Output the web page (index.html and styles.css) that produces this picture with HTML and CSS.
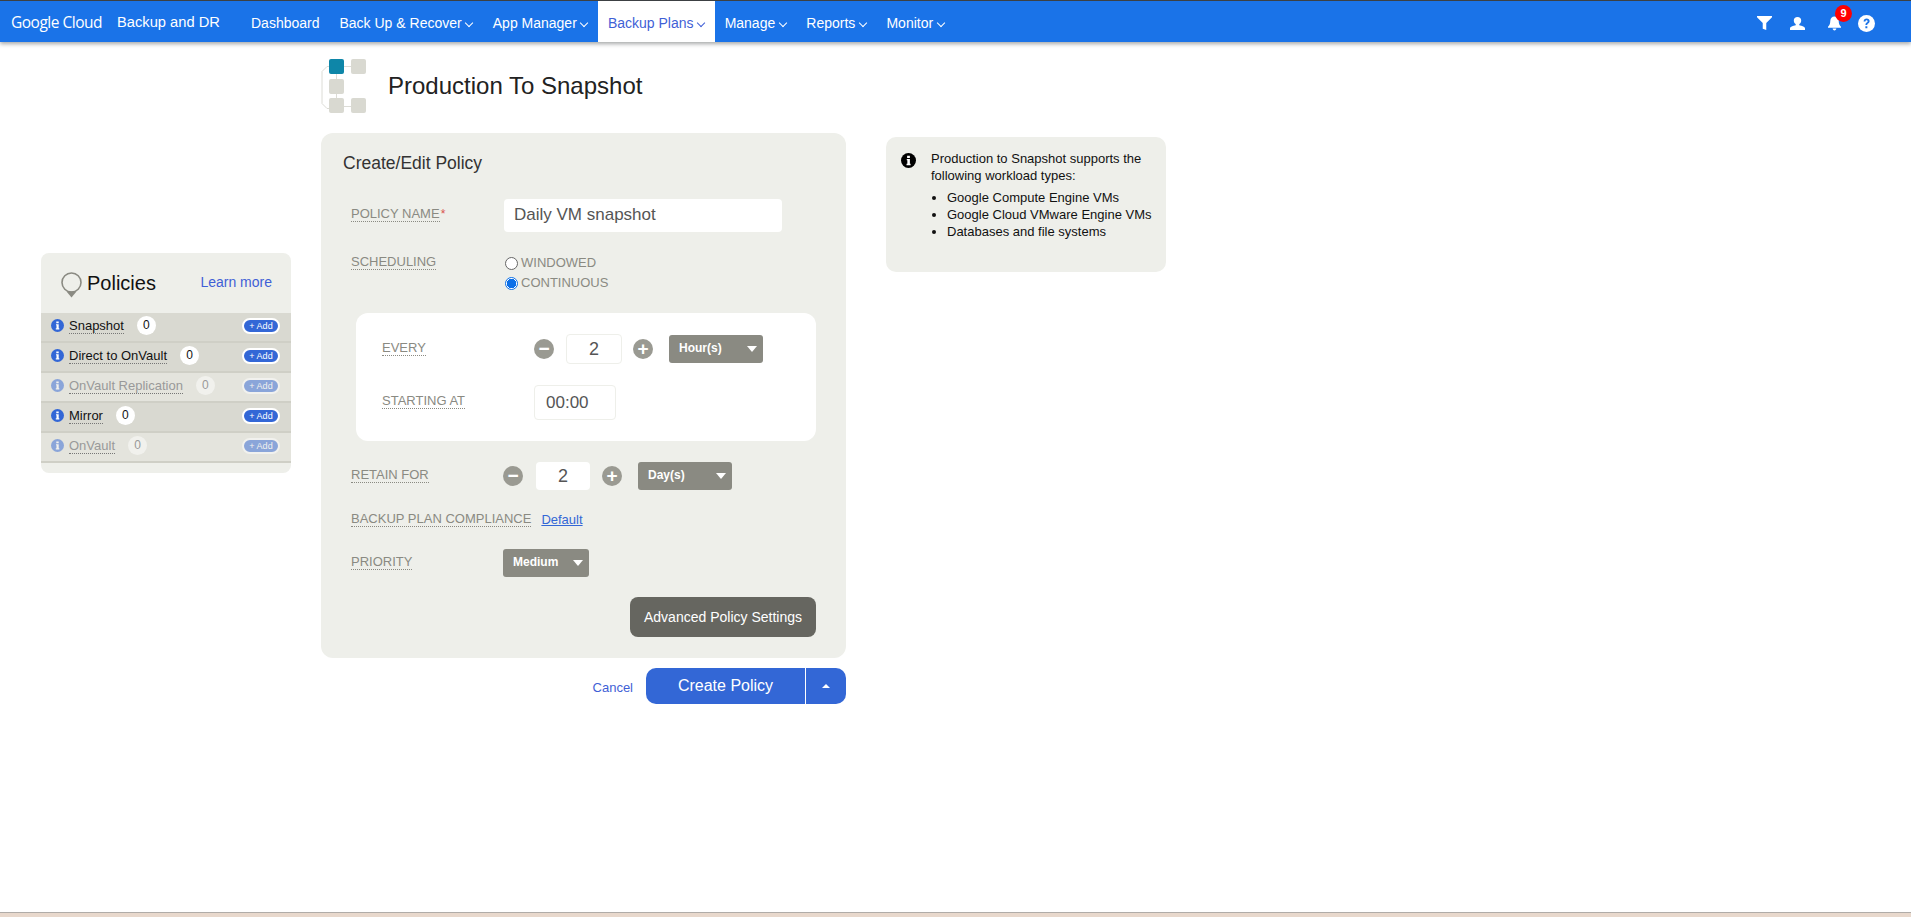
FILE: index.html
```html
<!DOCTYPE html>
<html lang="en">
<head>
  <meta charset="UTF-8">
  <title>Production To Snapshot</title>
  <link rel="stylesheet" href="styles.css">
</head>
<body>
  <header class="topbar">
    <div class="brand">Google Cloud</div>
    <div class="product">Backup and DR</div>
    <nav class="menu">
      <a class="menu-item">Dashboard</a>
      <a class="menu-item caret">Back Up &amp; Recover</a>
      <a class="menu-item caret">App Manager</a>
      <a class="menu-item caret active">Backup Plans</a>
      <a class="menu-item caret">Manage</a>
      <a class="menu-item caret">Reports</a>
      <a class="menu-item caret">Monitor</a>
    </nav>
    <div class="tools">
      <svg class="tool tool-filter" width="15" height="14" viewBox="0 0 17 16" preserveAspectRatio="none"><path d="M0 0h17v1.500L10.500 8v8l-4-1.500V8L0 1.500z" fill="#fff"/></svg>
      <svg class="tool tool-user" width="15" height="13" viewBox="0 0 15 15" preserveAspectRatio="none"><path d="M7.500 0c2.300 0 3.700 1.700 3.700 3.900 0 1.800-.8 3.400-1.900 4.300v1.200c2.500.8 5.700 1.700 5.700 3.600v2H0v-2c0-1.900 3.200-2.800 5.700-3.600V8.200C4.600 7.300 3.800 5.700 3.800 3.900 3.800 1.700 5.200 0 7.500 0z" fill="#fff"/></svg>
      <span class="bell">
        <svg width="13" height="15" viewBox="0 0 14 16"><path d="M7 .5c2.800 0 4.300 2 4.500 4.500.2 3 .6 4.700 2.500 6.500v1H0v-1C1.900 9.700 2.300 8 2.500 5 2.700 2.500 4.200.5 7 .5zM5 13.500h4c0 1.100-.9 2-2 2s-2-.9-2-2z" fill="#fff"/></svg>
        <span class="badge">9</span>
      </span>
      <svg class="tool" width="17" height="17" viewBox="0 0 18 18"><circle cx="9" cy="9" r="9" fill="#fff"/><path d="M5.900 6.800C6 4.900 7.300 3.700 9.200 3.700c1.800 0 3.100 1.100 3.100 2.700 0 1.200-.6 1.900-1.500 2.500-.8.500-1 .8-1 1.500v.3H7.900v-.5c0-1.100.4-1.700 1.300-2.300.7-.5 1-.8 1-1.400 0-.6-.4-1-1.100-1-.7 0-1.200.5-1.200 1.300zM7.800 12h2.100v2.100H7.800z" fill="#1a73e8"/></svg>
    </div>
  </header>

  <div class="page">
    <aside class="policies">
      <div class="policies-head">
        <svg class="pin" width="21" height="26" viewBox="0 0 21 26"><circle cx="10.500" cy="10.500" r="9.500" fill="none" stroke="#8a8a82" stroke-width="1.600"/><path d="M5.500 19.500h10l-5 6z" fill="#8a8a82"/></svg>
        <span class="policies-title">Policies</span>
        <a class="learn">Learn more</a>
      </div>
      <div class="policy-row">
        <svg class="info" width="13" height="13" viewBox="0 0 13 13"><circle cx="6.500" cy="6.500" r="6.500" fill="#3367d6"/><path d="M5.300 2.500h2.400v1.800H5.300zM5 5.200h2.700v4.100h.6v1.100H4.800V9.300h.7V6.300H5z" fill="#fff"/></svg>
        <span class="policy-name">Snapshot</span><span class="count">0</span>
        <span class="add">+ Add</span>
      </div>
      <div class="policy-row">
        <svg class="info" width="13" height="13" viewBox="0 0 13 13"><circle cx="6.500" cy="6.500" r="6.500" fill="#3367d6"/><path d="M5.300 2.500h2.400v1.800H5.300zM5 5.200h2.700v4.100h.6v1.100H4.800V9.300h.7V6.300H5z" fill="#fff"/></svg>
        <span class="policy-name">Direct to OnVault</span><span class="count">0</span>
        <span class="add">+ Add</span>
      </div>
      <div class="policy-row off">
        <svg class="info" width="13" height="13" viewBox="0 0 13 13"><circle cx="6.500" cy="6.500" r="6.500" fill="#3367d6"/><path d="M5.300 2.500h2.400v1.800H5.300zM5 5.200h2.700v4.100h.6v1.100H4.800V9.300h.7V6.300H5z" fill="#fff"/></svg>
        <span class="policy-name">OnVault Replication</span><span class="count">0</span>
        <span class="add">+ Add</span>
      </div>
      <div class="policy-row">
        <svg class="info" width="13" height="13" viewBox="0 0 13 13"><circle cx="6.500" cy="6.500" r="6.500" fill="#3367d6"/><path d="M5.300 2.500h2.400v1.800H5.300zM5 5.200h2.700v4.100h.6v1.100H4.800V9.300h.7V6.300H5z" fill="#fff"/></svg>
        <span class="policy-name">Mirror</span><span class="count">0</span>
        <span class="add">+ Add</span>
      </div>
      <div class="policy-row off">
        <svg class="info" width="13" height="13" viewBox="0 0 13 13"><circle cx="6.500" cy="6.500" r="6.500" fill="#3367d6"/><path d="M5.300 2.500h2.400v1.800H5.300zM5 5.200h2.700v4.100h.6v1.100H4.800V9.300h.7V6.300H5z" fill="#fff"/></svg>
        <span class="policy-name">OnVault</span><span class="count">0</span>
        <span class="add">+ Add</span>
      </div>
    </aside>

    <main class="main">
      <div class="title-row">
        <svg class="plan-icon" width="46" height="58" viewBox="0 0 46 58">
          <path d="M23 8.500h7M15.500 16v5M15.500 36v5M8 8.500H6l-5 5v32l5 5h2M23 48.500h7" fill="none" stroke="#dcdcd6" stroke-width="1"/>
          <rect x="8" y="1" width="15" height="15" rx="2" fill="#0e86a8"/>
          <rect x="30" y="1" width="15" height="15" rx="2" fill="#d9d9d1"/>
          <rect x="8" y="21" width="15" height="15" rx="2" fill="#d9d9d1"/>
          <rect x="8" y="40" width="15" height="15" rx="2" fill="#d9d9d1"/>
          <rect x="30" y="40" width="15" height="15" rx="2" fill="#d9d9d1"/>
        </svg>
        <h1 class="title">Production To Snapshot</h1>
      </div>

      <form class="card">
        <h2 class="card-title">Create/Edit Policy</h2>

        <div class="field field-name">
          <div class="label-col"><span class="label">POLICY NAME</span><span class="req">*</span></div>
          <div class="text-box name-box">Daily VM snapshot</div>
        </div>

        <div class="field field-sched">
          <div class="label-col"><span class="label">SCHEDULING</span></div>
          <div class="radios">
            <div class="radio-line"><span class="radio"></span>WINDOWED</div>
            <div class="radio-line"><span class="radio checked"></span>CONTINUOUS</div>
          </div>
        </div>

        <div class="inner">
          <div class="inner-row">
            <div class="inner-label"><span class="label">EVERY</span></div>
            <div class="stepper">
              <span class="round">&minus;</span>
              <span class="num num-every">2</span>
              <span class="round">+</span>
              <span class="select select-unit">Hour(s)</span>
            </div>
          </div>
          <div class="inner-row inner-row-start">
            <div class="inner-label"><span class="label">STARTING AT</span></div>
            <div class="time-box">00:00</div>
          </div>
        </div>

        <div class="field field-retain">
          <div class="label-col"><span class="label">RETAIN FOR</span></div>
          <div class="stepper">
            <span class="round">&minus;</span>
            <span class="num num-retain">2</span>
            <span class="round">+</span>
            <span class="select select-unit">Day(s)</span>
          </div>
        </div>

        <div class="field field-comp">
          <span class="label">BACKUP PLAN COMPLIANCE</span>
          <a class="default-link">Default</a>
        </div>

        <div class="field field-prio">
          <div class="label-col"><span class="label">PRIORITY</span></div>
          <span class="select select-prio">Medium</span>
        </div>

        <div class="adv-row"><span class="adv">Advanced Policy Settings</span></div>
      </form>

      <div class="actions">
        <a class="cancel">Cancel</a>
        <div class="create">
          <span class="create-main">Create Policy</span>
          <span class="create-more"></span>
        </div>
      </div>
    </main>

    <aside class="note">
      <svg class="note-icon" width="15" height="15" viewBox="0 0 13 13"><circle cx="6.500" cy="6.500" r="6.500" fill="#000"/><path d="M5.300 2.300h2.400v2H5.300zM5 5.200h2.700v4.200h.6v1.200H4.800V9.400h.7V6.300H5z" fill="#fff"/></svg>
      <div class="note-text">
        <p>Production to Snapshot supports the following workload types:</p>
        <ul>
          <li>Google Compute Engine VMs</li>
          <li>Google Cloud VMware Engine VMs</li>
          <li>Databases and file systems</li>
        </ul>
      </div>
    </aside>
  </div>

  <footer class="foot"></footer>
</body>
</html>
```

FILE: styles.css
```css
* {
  margin: 0;
  padding: 0;
  box-sizing: border-box;
}
html, body {
  height: 100%;
  overflow: hidden;
}
body {
  display: flex;
  flex-direction: column;
  background: #fff;
  color: #222;
  font-family: "Liberation Sans", Arial, sans-serif;
  font-size: 14px;
}

/* top bar */
.topbar {
  display: flex;
  align-items: center;
  height: 42px;
  flex: none;
  border-top: 1px solid #3c4043;
  padding-left: 11px;
  background: #1a73e8;
  color: #fff;
  box-shadow: 0 2px 4px rgba(60, 64, 67, .45);
  position: relative;
}
.brand {
  width: 106px;
  font-family: "Open Sans", sans-serif;
  font-size: 15.500px;
  letter-spacing: -.5px;
  white-space: nowrap;
}
.product {
  width: 124px;
  padding-top: 1px;
  font-size: 14.700px;
  white-space: nowrap;
}
.menu {
  display: flex;
  align-self: stretch;
}
.menu-item {
  display: flex;
  align-items: center;
  padding: 3px 10px 0;
  white-space: nowrap;
}
.caret::after {
  content: "";
  width: 5px;
  height: 5px;
  margin: 0 .6px 0 4.500px;
  border-right: 1.800px solid currentColor;
  border-bottom: 1.800px solid currentColor;
  transform: rotate(45deg);
}
.menu-item.active {
  background: #fff;
  color: #3f5fd6;
}
.tools {
  display: flex;
  align-items: center;
  margin-left: auto;
  padding: 3px 36px 0 0;
}
.tool-filter {
  margin-right: 18px;
}
.tool-user {
  margin-right: 23px;
}
.bell {
  position: relative;
  display: flex;
  margin-right: 17px;
}
.badge {
  position: absolute;
  top: -11px;
  left: 7px;
  width: 17px;
  height: 17px;
  border-radius: 50%;
  background: #f00;
  font-size: 11px;
  font-weight: bold;
  line-height: 17px;
  text-align: center;
}

/* page columns */
.page {
  display: flex;
  align-items: flex-start;
  flex: 1;
  padding-left: 41px;
}

/* policies */
.policies {
  width: 250px;
  margin-top: 211px;
  padding-bottom: 10px;
  border-radius: 8px;
  background: #eeefea;
}
.policies-head {
  display: flex;
  align-items: center;
  height: 60px;
  padding: 0 19px 0 20px;
}
.pin {
  margin-top: 3px;
}
.policies-title {
  margin-left: 5px;
  color: #111;
  font-size: 20px;
}
.learn {
  margin-left: auto;
  padding-bottom: 2px;
  color: #3f5fd6;
}
.policy-row {
  display: flex;
  align-items: center;
  height: 30px;
  padding: 0 11px 3px 10px;
  border-bottom: 2px solid #cfcfc6;
  background: #d9d9d1;
  color: #111;
  font-size: 13px;
}
.policy-row.off {
  background: #e4e4dd;
  color: #999;
}
.policy-row.off .info,
.policy-row.off .add {
  opacity: .5;
}
.policy-row.off .count {
  background: #f1f1ed;
}
.policy-name {
  margin-left: 5px;
  border-bottom: 1px dotted #777;
}
.count {
  width: 19px;
  height: 19px;
  margin-left: 13px;
  border-radius: 50%;
  background: #fff;
  line-height: 19px;
  text-align: center;
  font-size: 12px;
}
.add {
  margin-left: auto;
  width: 38px;
  height: 16px;
  border: 2px solid #fff;
  border-radius: 8px;
  background: #3367d6;
  color: #fff;
  font-size: 9px;
  line-height: 12px;
  text-align: center;
}

/* main column */
.main {
  width: 525px;
  margin-left: 30px;
}
.title-row {
  display: flex;
  align-items: flex-start;
  height: 91px;
  padding-top: 16px;
}
.title {
  margin: 14px 0 0 21px;
  color: #222;
  font-size: 24px;
  font-weight: normal;
}
.card {
  height: 525px;
  padding: 20px 30px 0 30px;
  border-radius: 12px;
  background: #eeefea;
}
.card-title {
  margin-left: -8px;
  color: #333;
  font-size: 17.500px;
  line-height: 20px;
  font-weight: normal;
}
.label {
  border-bottom: 1px dotted #8a8a82;
  color: #8a8a82;
  font-size: 13px;
}
.req {
  color: #d9534f;
  font-size: 12px;
  margin-left: 1px;
}
.field {
  display: flex;
  align-items: center;
}
.label-col {
  flex: none;
  width: 152px;
  padding-bottom: 5px;
}
.field-name {
  margin-top: 26px;
  height: 33px;
}
.text-box {
  border-radius: 4px;
  background: #fff;
  color: #555;
}
.name-box {
  width: 278px;
  height: 33px;
  margin-left: 1px;
  padding-left: 10px;
  font-size: 17px;
  line-height: 31px;
}
.field-sched {
  align-items: flex-start;
  margin-top: 21px;
}
.radios {
  color: #8a8a82;
  font-size: 13px;
  margin: -1px 0 0 2px;
}
.radio-line {
  display: flex;
  align-items: center;
  height: 20px;
}
.radio {
  width: 13px;
  height: 13px;
  margin: 2px 3px 0 0;
  border: 1px solid #666;
  border-radius: 50%;
  background: #fff;
}
.radio.checked {
  border-color: #0b6fe8;
  background: radial-gradient(circle, #0b6fe8 0, #0b6fe8 4.500px, #fff 5px);
}
.inner {
  height: 128px;
  margin-top: 21px;
  padding: 21px 0 0 26px;
  margin-left: 5px;
  border-radius: 12px;
  background: #fff;
}
.inner-row {
  display: flex;
  align-items: center;
  height: 30px;
}
.inner-row-start {
  height: 35px;
  margin-top: 21px;
}
.inner-label {
  flex: none;
  width: 152px;
  padding-bottom: 5px;
}
.stepper {
  display: flex;
  align-items: center;
}
.round {
  width: 20px;
  height: 20px;
  border-radius: 50%;
  background: #9a9a92;
  color: #fff;
  font-size: 19px;
  font-weight: bold;
  line-height: 19px;
  text-align: center;
}
.num {
  height: 30px;
  margin: 0 12px;
  border-radius: 4px;
  background: #fff;
  color: #555;
  font-size: 18px;
  line-height: 28px;
  text-align: center;
}
.num-every {
  width: 56px;
  margin-right: 11px;
  border: 1px solid #eeefea;
}
.num-retain {
  width: 54px;
  height: 28px;
  margin: 0 12px 0 13px;
}
.select {
  position: relative;
  display: block;
  height: 28px;
  border-radius: 3px;
  background: #8a8a82;
  color: #fff;
  font-size: 12px;
  font-weight: bold;
  line-height: 27px;
  padding-left: 10px;
}
.select::after {
  content: "";
  position: absolute;
  top: 11px;
  right: 6px;
  border-left: 5.500px solid transparent;
  border-right: 5.500px solid transparent;
  border-top: 6px solid #fff;
}
.select-unit {
  width: 94px;
  margin-left: 16px;
}
.select-prio {
  width: 86px;
}
.time-box {
  width: 82px;
  height: 35px;
  border: 1px solid #eeefea;
  border-radius: 4px;
  color: #555;
  font-size: 17px;
  line-height: 33px;
  padding-left: 11px;
}
.field-retain {
  margin-top: 21px;
  height: 28px;
}
.field-comp {
  margin-top: 20px;
  height: 18px;
}
.default-link {
  margin-left: 10px;
  color: #3367d6;
  font-size: 13px;
  text-decoration: underline;
}
.field-prio {
  margin-top: 21px;
  height: 28px;
}
.adv-row {
  display: flex;
  justify-content: flex-end;
  margin-top: 20px;
}
.adv {
  width: 186px;
  height: 40px;
  border-radius: 8px;
  background: #666660;
  color: #fff;
  font-size: 14px;
  line-height: 40px;
  text-align: center;
}
.actions {
  display: flex;
  align-items: center;
  justify-content: flex-end;
  margin-top: 10px;
}
.cancel {
  margin-right: 13px;
  color: #3f5fd6;
  font-size: 13px;
  padding-top: 2px;
}
.create {
  display: flex;
  width: 200px;
  height: 36px;
  border-radius: 10px;
  overflow: hidden;
  background: #3367d6;
  color: #fff;
}
.create-main {
  width: 160px;
  border-right: 1px solid #fff;
  font-size: 16px;
  line-height: 35px;
  text-align: center;
}
.create-more {
  position: relative;
  flex: 1;
}
.create-more::after {
  content: "";
  position: absolute;
  top: 16px;
  left: 16px;
  border-left: 4px solid transparent;
  border-right: 4px solid transparent;
  border-bottom: 4px solid #fff;
}

/* side note */
.note {
  display: flex;
  width: 280px;
  height: 135px;
  margin: 95px 0 0 40px;
  padding: 13px 10px 0 15px;
  border-radius: 10px;
  background: #eeefea;
  color: #111;
  font-size: 13px;
  line-height: 17px;
}
.note-icon {
  flex: none;
  margin: 3px 15px 0 0;
}
.note-text ul {
  margin-top: 5px;
  padding-left: 16px;
}

.foot {
  flex: none;
  height: 5px;
  border-top: 1px solid #b0aca8;
  background: #e8d8cc;
}
```
